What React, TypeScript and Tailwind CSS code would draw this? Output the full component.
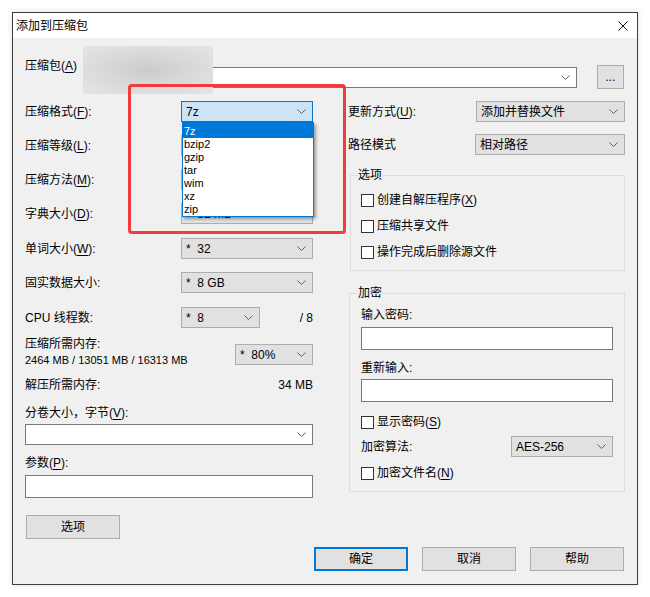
import type { ReactNode } from "react";

const Chevron = () => (
  <svg width="9" height="5" viewBox="0 0 9 5" className="shrink-0">
    <path d="M0.5 0.5 L4.5 4.5 L8.5 0.5" fill="none" stroke="#606060" strokeWidth="1" />
  </svg>
);

const Key = ({ k }: { k: string }) => (
  <>
    (<span className="underline underline-offset-[2px]">{k}</span>)
  </>
);

const Combo = ({
  value,
  className = "",
  active = false,
  white = false,
  children,
}: {
  value?: string;
  className?: string;
  active?: boolean;
  white?: boolean;
  children?: ReactNode;
}) => (
  <div
    className={`relative flex h-[21px] shrink-0 items-center justify-between border pl-[4px] pr-[6px] ${
      active
        ? "border-[#0078d7] bg-[#cce4f7]"
        : white
        ? "border-[#7a7a7a] bg-white"
        : "border-[#adadad] bg-[#e1e1e1]"
    } ${className}`}
  >
    <span className="whitespace-pre leading-none">{value}</span>
    <Chevron />
    {children}
  </div>
);

const Button = ({ label, primary = false, className = "" }: { label: string; primary?: boolean; className?: string }) => (
  <div
    className={`flex h-[24px] w-[94px] items-center justify-center bg-[#e1e1e1] ${
      primary ? "border-2 border-[#0078d7]" : "border border-[#adadad]"
    } ${className}`}
  >
    {label}
  </div>
);

const Check = ({ children, className = "" }: { children: ReactNode; className?: string }) => (
  <div className={`flex h-[16px] items-center ${className}`}>
    <div className="h-[13px] w-[13px] shrink-0 border border-[#333333] bg-white" />
    <span className="ml-[3px] leading-[16px]">{children}</span>
  </div>
);

const Row = ({ label, children, className = "", labelWidth = "w-[156px]" }: { label: ReactNode; children: ReactNode; className?: string; labelWidth?: string }) => (
  <div className={`flex h-[21px] items-center ${className}`}>
    <span className={`${labelWidth} shrink-0 leading-[16px]`}>{label}</span>
    {children}
  </div>
);

const formats = ["7z", "bzip2", "gzip", "tar", "wim", "xz", "zip"];

export default function App() {
  return (
    <div className="min-h-[597px] bg-white pl-[12px] pt-[12px] font-['Liberation_Sans','Noto_Sans_CJK_SC',sans-serif] text-[12px] text-black">
      <div className="flex h-[573px] w-[626px] flex-col border border-[#3d3d3d] bg-[#f0f0f0] shadow-[0_0_6px_rgba(0,0,0,0.12)]">
        {/* Title bar */}
        <div className="flex h-[25px] shrink-0 items-center justify-between bg-white pl-[3px] pr-[9px]">
          <span className="leading-[16px]">添加到压缩包</span>
          <svg width="10" height="10" viewBox="0 0 10 10">
            <path d="M0.5 0.5 L9.5 9.5 M9.5 0.5 L0.5 9.5" stroke="#111" strokeWidth="1" />
          </svg>
        </div>

        {/* Body */}
        <div className="relative flex-1 pl-[12px] pr-[11px] pt-[20px]">
          {/* Archive row */}
          <div className="flex items-start">
            <span className="w-[60px] shrink-0 leading-[16px]">
              压缩包<Key k="A" />
            </span>
            <Combo white className="mt-[9px] w-[492px]" />
            <div className="ml-[20px] mt-[7px] flex h-[24px] w-[27px] items-center justify-center border border-[#adadad] bg-[#e1e1e1] leading-none">
              ...
            </div>
          </div>

          {/* Two columns */}
          <div className="mt-[12px] flex">
            {/* Left column */}
            <div className="flex w-[288px] shrink-0 flex-col">
              <Row label={<>压缩格式<Key k="F" />:</>}>
                <Combo active value="7z" className="w-[132px] pl-[3px]">
                  <div className="absolute left-0 top-[20px] z-10 w-[132px] border border-[#0078d7] bg-white text-[11px] shadow-[2px_2px_3px_rgba(0,0,0,0.35)]">
                    {formats.map((f, i) => (
                      <div
                        key={f}
                        className={`pl-[1px] leading-[13px] ${
                          i === 0 ? "h-[15px] bg-[#0078d7] pt-[2px] text-white" : "h-[13px]"
                        }`}
                      >
                        {f}
                      </div>
                    ))}
                  </div>
                </Combo>
              </Row>
              <Row className="mt-[13px]" label={<>压缩等级<Key k="L" />:</>}>
                <Combo className="w-[132px]" />
              </Row>
              <Row className="mt-[13px]" label={<>压缩方法<Key k="M" />:</>}>
                <Combo className="w-[132px]" />
              </Row>
              <Row className="mt-[13px]" label={<>字典大小<Key k="D" />:</>}>
                <Combo value="*  32 MB" className="w-[132px]" />
              </Row>
              <Row className="mt-[14px]" label={<>单词大小<Key k="W" />:</>}>
                <Combo value="*  32" className="w-[132px]" />
              </Row>
              <Row className="mt-[13px]" label="固实数据大小:">
                <Combo value="*  8 GB" className="w-[132px]" />
              </Row>
              <Row className="mt-[14px]" label="CPU 线程数:">
                <Combo value="*  8" className="w-[79px]" />
                <span className="flex-1 text-right">/ 8</span>
              </Row>

              <div className="mt-[8px] flex items-start justify-between">
                <div className="flex flex-col leading-[16px]">
                  <span>压缩所需内存:</span>
                  <span className="text-[11px]">2464 MB / 13051 MB / 16313 MB</span>
                </div>
                <Combo value="*  80%" className="mt-[8px] w-[78px]" />
              </div>

              <div className="mt-[9px] flex h-[16px] items-center justify-between leading-[16px]">
                <span>解压所需内存:</span>
                <span>34 MB</span>
              </div>

              <span className="mt-[12px] leading-[16px]">
                分卷大小，字节<Key k="V" />:
              </span>
              <Combo white className="mt-[3px] w-[288px]" />

              <span className="mt-[10px] leading-[16px]">
                参数<Key k="P" />:
              </span>
              <div className="mt-[4px] h-[23px] w-[288px] border border-[#7a7a7a] bg-white" />

              <Button label="选项" className="ml-px mt-[17px]" />
            </div>

            {/* Right column */}
            <div className="ml-[35px] flex w-[277px] shrink-0 flex-col">
              <Row labelWidth="w-[128px]" label={<>更新方式<Key k="U" />:</>}>
                <Combo value="添加并替换文件" className="w-[149px]" />
              </Row>
              <Row className="mt-[12px]" labelWidth="w-[127px]" label="路径模式">
                <Combo value="相对路径" className="w-[150px]" />
              </Row>

              <fieldset className="ml-[2px] mt-[12px] w-[275px] border border-[#dcdcdc] pb-[10px] pl-[10px] pt-[9px]">
                <legend className="-ml-[4px] px-[1px] leading-[16px]">选项</legend>
                <Check>
                  创建自解压程序<Key k="X" />
                </Check>
                <Check className="mt-[10px]">压缩共享文件</Check>
                <Check className="mt-[10px]">操作完成后删除源文件</Check>
              </fieldset>

              <fieldset className="ml-px mt-[14px] w-[276px] border border-[#dcdcdc] pb-[10px] pl-[11px] pr-[11px] pt-[6px]">
                <legend className="-ml-[4px] px-[1px] leading-[16px]">加密</legend>
                <span className="block leading-[16px]">输入密码:</span>
                <div className="mt-[4px] h-[23px] w-[252px] border border-[#7a7a7a] bg-white" />
                <span className="mt-[10px] block leading-[16px]">重新输入:</span>
                <div className="mt-[3px] h-[23px] w-[252px] border border-[#7a7a7a] bg-white" />
                <Check className="mt-[12px]">
                  显示密码<Key k="S" />
                </Check>
                <div className="mt-[6px] flex h-[21px] w-[252px] items-center justify-between">
                  <span className="leading-[16px]">加密算法:</span>
                  <Combo value="AES-256" className="w-[102px]" />
                </div>
                <Check className="mt-[8px]">
                  加密文件名<Key k="N" />
                </Check>
              </fieldset>
            </div>
          </div>

          {/* Bottom buttons */}
          <div className="mr-[2px] mt-[8px] flex justify-end gap-[14px]">
            <Button label="确定" primary />
            <Button label="取消" />
            <Button label="帮助" />
          </div>

          {/* Redacted path */}
          <div className="absolute left-[70px] top-[8px] h-[48px] w-[130px] bg-[radial-gradient(ellipse_at_center,#cbcbcb_0%,#d8d8d8_45%,#e5e5e5_100%)]" />

          {/* Red annotation */}
          <div className="pointer-events-none absolute left-[115px] top-[46px] z-20 h-[150px] w-[218px] rounded-[4px] border-[3px] border-[#f33b3b]" />
        </div>
      </div>
    </div>
  );
}
